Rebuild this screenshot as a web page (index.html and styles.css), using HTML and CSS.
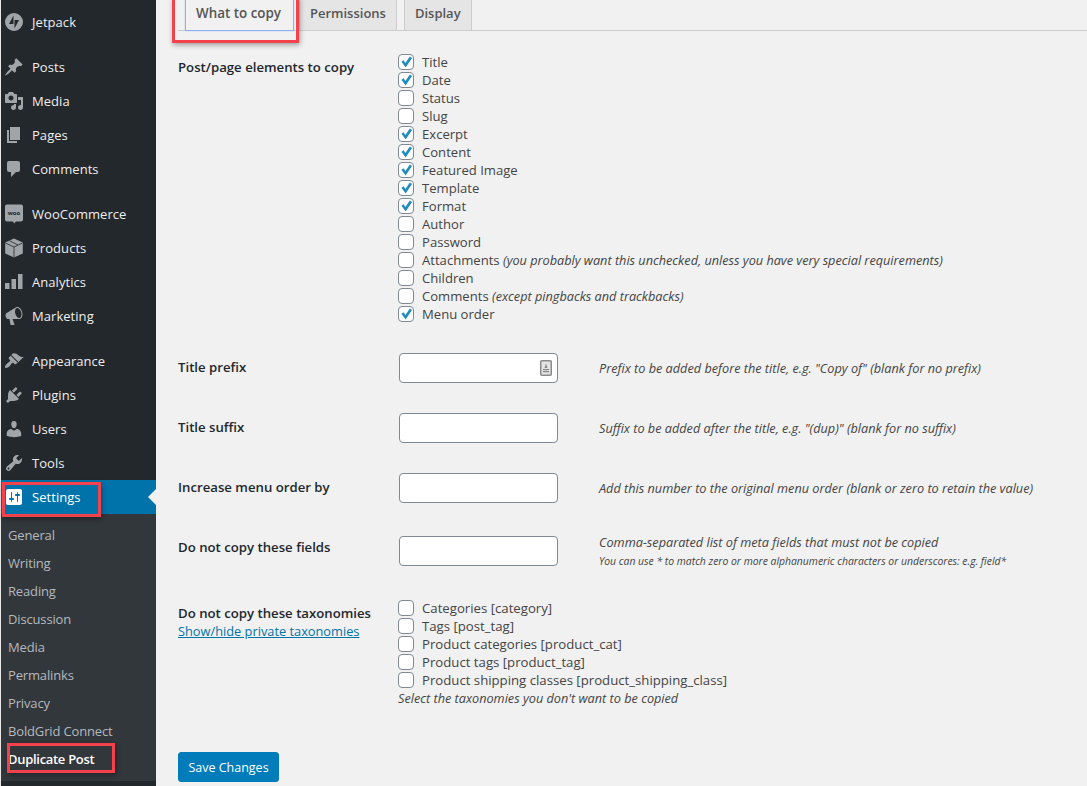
FILE: index.html
```html
<!DOCTYPE html>
<html lang="en">
<head>
<meta charset="utf-8">
<title>Duplicate Post Options</title>
<link rel="stylesheet" href="styles.css">
</head>
<body>
<div class="app">
  <nav class="sidebar">
    <ul class="menu">
      <li class="item"><svg class="ico" viewBox="0 0 20 20"><path fill-rule="evenodd" d="M10 1a9 9 0 1 1 0 18 9 9 0 0 1 0-18zM9.500 3.500 5 12h4.500zM10.500 16.500 15 8h-4.500z"/></svg>Jetpack</li>
      <li class="sep"></li>
      <li class="item"><svg class="ico" viewBox="0 0 20 20"><path d="M10.440 3.020l1.820-1.820 6.360 6.350-1.830 1.820c-1.050-.680-2.480-.570-3.410.360l-.750.750c-.920.930-1.040 2.350-.350 3.410l-1.830 1.820-2.410-2.410-2.800 2.790c-.420.420-3.380 2.710-3.800 2.290s1.860-3.390 2.280-3.810l2.790-2.790L4.100 9.360l1.830-1.820c1.050.690 2.480.570 3.400-.360l.750-.750c.930-.920 1.050-2.350.360-3.410z"/></svg>Posts</li>
      <li class="item"><svg class="ico" viewBox="0 0 20 20"><path d="M13 11V4c0-.550-.450-1-1-1h-1.670L9 1H5L3.670 3H2c-.550 0-1 .450-1 1v7c0 .550.450 1 1 1h10c.550 0 1-.450 1-1zM7 4.500c1.380 0 2.500 1.120 2.500 2.500S8.380 9.500 7 9.500 4.500 8.380 4.500 7 5.620 4.500 7 4.500zM14 6h5v10.500c0 1.380-1.120 2.500-2.500 2.500S14 17.880 14 16.500s1.120-2.500 2.500-2.500c.170 0 .340.020.500.050V9h-3V6zm-4 8.050V13h2v3.500c0 1.380-1.120 2.500-2.500 2.500S7 17.880 7 16.500 8.120 14 9.500 14c.170 0 .340.020.500.050z"/></svg>Media</li>
      <li class="item"><svg class="ico" viewBox="0 0 20 20"><path d="M6 15V2h10v13H6zm-1 1h8v2H3V5h2v11z"/></svg>Pages</li>
      <li class="item"><svg class="ico" viewBox="0 0 20 20"><path d="M5 2h9c1.100 0 2 .900 2 2v7c0 1.100-.900 2-2 2h-2l-5 5v-5H5c-1.100 0-2-.900-2-2V4c0-1.100.900-2 2-2z"/></svg>Comments</li>
      <li class="sep"></li>
      <li class="item"><svg class="ico" viewBox="0 0 20 20"><path d="M3 .500h14c1.100 0 2 .900 2 2v13c0 1.100-.900 2-2 2h-5l-2 2-.800-2H3c-1.100 0-2-.900-2-2v-13c0-1.100.900-2 2-2z"/><text class="woo" x="10" y="11" text-anchor="middle">woo</text></svg>WooCommerce</li>
      <li class="item"><svg class="ico" viewBox="0 0 20 20"><path d="M10 .500 18.800 4.500V15.500L10 19.500 1.200 15.500V4.500z"/><path class="cube" d="M1.500 5 10 9 18.500 5M10 9V19.500M5.500 2.800 14 7"/></svg>Products</li>
      <li class="item"><svg class="ico" viewBox="0 0 20 20"><path d="M1 11h4.500v6H1zM7.500 7H12v10H7.500zM14 2h4.500v15H14z"/></svg>Analytics</li>
      <li class="item"><svg class="ico" viewBox="0 0 20 20"><path fill-rule="evenodd" d="M18.150 5.940c.460 1.620.380 3.220-.020 4.480-.420 1.280-1.260 2.180-2.300 2.480-.160.060-.260.060-.400.060-.060.020-.120.020-.180.020-.060.020-.140.020-.220.020H8.500l2 5.500c.020.140-.060.260-.140.340-.080.100-.240.160-.340.160H6.950c-.100 0-.260-.060-.340-.160-.080-.080-.160-.200-.140-.340l-1-5.500H4.250c-.500.060-1.080-.180-1.540-.620s-.880-1.080-1.060-1.880c-.240-.800-.200-1.560-.020-2.200.180-.620.580-1.080 1.060-1.300l9-5.420c.100-.060.180-.100.240-.160.060-.040.140-.080.240-.120.160-.080.280-.120.500-.180 1.040-.300 2.240.100 3.220 1 .980.880 1.800 2.240 2.260 3.860zm-2.600 5.980c.400-.100.740-.340 1.040-.700.580-.700.860-1.760.860-3.040 0-.640-.100-1.300-.280-1.980-.340-1.360-1.020-2.500-1.780-3.240s-1.680-1.100-2.460-.880c-.820.220-1.400.960-1.700 2-.320 1.040-.280 2.360.060 3.720.380 1.360 1 2.500 1.800 3.240.780.740 1.620 1.100 2.460.880z"/></svg>Marketing</li>
      <li class="sep"></li>
      <li class="item"><svg class="ico" viewBox="0 0 20 20"><path d="M14.480 11.060L7.410 3.990l1.500-1.500c.500-.560 2.300-.470 3.510.320 1.210.800 1.430 1.280 2.910 2.100 1.180.640 2.450 1.260 4.450.850zm-.710.710L6.700 4.700 4.930 6.470c-.390.390-.390 1.020 0 1.410l1.060 1.060c.390.390.390 1.030 0 1.420-.600.600-1.430 1.150-2.210 1.730-.350.260-.700.530-1.010.840C1.430 13.710.600 15.950 1.300 16.650c.700.690 2.940-.130 4.200-1.470.310-.310.580-.660.840-1.010.580-.780 1.130-1.610 1.730-2.210.390-.390 1.030-.390 1.420 0l1.060 1.060c.390.390 1.020.390 1.410 0z"/></svg>Appearance</li>
      <li class="item"><svg class="ico" viewBox="0 0 20 20"><path d="M13.110 4.360L9.870 7.600 8 5.730l3.240-3.240c.350-.340 1.050-.200 1.560.320.520.510.660 1.210.310 1.550zm-8 1.770l.910-1.120 9.010 9.010-1.190.840c-.710.710-2.630 1.160-3.820 1.160H6.140L4.900 17.260c-.590.590-1.540.590-2.120 0-.590-.580-.590-1.530 0-2.120l1.240-1.240v-3.880c0-1.130.400-3.190 1.090-3.890zm7.260 3.970l3.240-3.240c.340-.350 1.040-.210 1.550.31.520.510.660 1.210.31 1.550l-3.240 3.250z"/></svg>Plugins</li>
      <li class="item"><svg class="ico" viewBox="0 0 20 20"><path d="M10 9.250c-2.270 0-2.730-3.440-2.730-3.440C7 4.020 7.820 2 9.970 2c2.160 0 2.980 2.020 2.710 3.810 0 0-.410 3.440-2.680 3.440zm0 2.570L12.720 10c2.390 0 4.520 2.330 4.520 4.530v2.490s-3.650 1.130-7.240 1.130c-3.650 0-7.240-1.130-7.240-1.130v-2.490c0-2.250 1.940-4.480 4.470-4.480z"/></svg>Users</li>
      <li class="item"><svg class="ico" viewBox="0 0 20 20"><path fill-rule="evenodd" d="M16.680 9.770c-1.340 1.340-3.300 1.670-4.950.990l-5.410 6.520c-.990.990-2.590.990-3.580 0s-.990-2.590 0-3.570l6.520-5.420c-.680-1.650-.350-3.610.990-4.950 1.280-1.280 3.120-1.620 4.720-1.060l-2.890 2.890 2.820 2.820 2.860-2.870c.530 1.580.180 3.390-1.080 4.650zM3.810 16.210c.400.390 1.040.390 1.430 0 .400-.400.400-1.040 0-1.430-.390-.400-1.030-.400-1.430 0-.390.390-.390 1.030 0 1.430z"/></svg>Tools</li>
      <li class="item current"><svg class="ico" viewBox="0 0 20 20"><path fill-rule="evenodd" d="M18 16V4c0-1.100-.900-2-2-2H4c-1.100 0-2 .900-2 2v12c0 1.100.900 2 2 2h12c1.100 0 2-.900 2-2zM8 11h1c.550 0 1 .450 1 1s-.450 1-1 1H8v1.500c0 .280-.220.500-.500.500s-.500-.220-.500-.500V13H6c-.550 0-1-.450-1-1s.450-1 1-1h1V5.500c0-.280.220-.500.500-.500s.500.220.500.500V11zm5-2h-1c-.550 0-1-.450-1-1s.450-1 1-1h1V5.500c0-.280.220-.500.500-.500s.500.220.500.500V7h1c.550 0 1 .450 1 1s-.450 1-1 1h-1v5.500c0 .280-.220.500-.500.500s-.500-.220-.500-.500V9z"/></svg>Settings</li>
    </ul>
    <ul class="submenu">
      <li>General</li>
      <li>Writing</li>
      <li>Reading</li>
      <li>Discussion</li>
      <li>Media</li>
      <li>Permalinks</li>
      <li>Privacy</li>
      <li>BoldGrid Connect</li>
      <li class="active">Duplicate Post</li>
    </ul>
    <div class="mark mark-settings"></div>
    <div class="mark mark-dup"></div>
  </nav>
  <main class="content">
    <div class="tabs">
      <a class="tab tab-active">What to copy</a>
      <a class="tab">Permissions</a>
      <a class="tab">Display</a>
    </div>
    <div class="mark mark-tab"></div>
    <form class="form">
      <div class="row row-elements">
        <div class="th">Post/page elements to copy</div>
        <div class="checks">
          <label><input type="checkbox" checked>Title</label>
          <label><input type="checkbox" checked>Date</label>
          <label><input type="checkbox">Status</label>
          <label><input type="checkbox">Slug</label>
          <label><input type="checkbox" checked>Excerpt</label>
          <label><input type="checkbox" checked>Content</label>
          <label><input type="checkbox" checked>Featured Image</label>
          <label><input type="checkbox" checked>Template</label>
          <label><input type="checkbox" checked>Format</label>
          <label><input type="checkbox">Author</label>
          <label><input type="checkbox">Password</label>
          <label><input type="checkbox">Attachments&nbsp;<em>(you probably want this unchecked, unless you have very special requirements)</em></label>
          <label><input type="checkbox">Children</label>
          <label><input type="checkbox">Comments&nbsp;<em>(except pingbacks and trackbacks)</em></label>
          <label><input type="checkbox" checked>Menu order</label>
        </div>
      </div>
      <div class="row row-field">
        <div class="th">Title prefix</div>
        <div class="field"><input type="text"><svg class="autofill" viewBox="0 0 12 16"><rect x=".75" y=".75" width="10.500" height="14.500" rx="1"/><path d="M6 3.500 7.500 8h-3zM3 9h6v1.200H3zM3 11h6v1.200H3z"/></svg></div>
        <div class="desc">Prefix to be added before the title, e.g. "Copy of" (blank for no prefix)</div>
      </div>
      <div class="row row-field">
        <div class="th">Title suffix</div>
        <div class="field"><input type="text"></div>
        <div class="desc">Suffix to be added after the title, e.g. "(dup)" (blank for no suffix)</div>
      </div>
      <div class="row row-field">
        <div class="th">Increase menu order by</div>
        <div class="field"><input type="text"></div>
        <div class="desc">Add this number to the original menu order (blank or zero to retain the value)</div>
      </div>
      <div class="row row-field row-meta">
        <div class="th">Do not copy these fields</div>
        <div class="field"><input type="text"></div>
        <div class="desc">Comma-separated list of meta fields that must not be copied<small>You can use * to match zero or more alphanumeric characters or underscores: e.g. field*</small></div>
      </div>
      <div class="row row-tax">
        <div class="th">Do not copy these taxonomies<a class="toggle">Show/hide private taxonomies</a></div>
        <div class="checks">
          <label><input type="checkbox">Categories [category]</label>
          <label><input type="checkbox">Tags [post_tag]</label>
          <label><input type="checkbox">Product categories [product_cat]</label>
          <label><input type="checkbox">Product tags [product_tag]</label>
          <label><input type="checkbox">Product shipping classes [product_shipping_class]</label>
          <em class="hint">Select the taxonomies you don't want to be copied</em>
        </div>
      </div>
      <button class="save" type="button">Save Changes</button>
    </form>
  </main>
</div>
</body>
</html>
```

FILE: styles.css
```css
* { box-sizing: border-box; }
html, body { margin: 0; height: 786px; overflow: hidden; }
body { font-family: "Open Sans", "Noto Sans", sans-serif; font-size: 13px; color: #444; background: #f1f1f1; }
ul { list-style: none; margin: 0; padding: 0; }

.app { display: flex; height: 786px; }

.sidebar { position: relative; flex: 0 0 156px; background: #23282d; border-left: 1px solid #e8e8e8; padding-top: 5px; }
.item { display: flex; align-items: center; height: 34px; padding-left: 3px; color: #eee; font-size: 13px; letter-spacing: .05px; }
.sep { height: 11px; }
.ico { flex: 0 0 20px; width: 20px; height: 20px; margin-right: 8px; fill: #a0a5aa; }
.woo { font: 700 6px "Open Sans", sans-serif; fill: #23282d; }
.cube { fill: none; stroke: #23282d; stroke-width: .8; }
.current { position: relative; background: #0073aa; color: #fff; }
.current .ico { fill: #fff; }
.current::after { content: ""; position: absolute; right: 0; top: 9px; border: 8px solid transparent; border-right-color: #f1f1f1; border-left-width: 0; }
.submenu { background: #32373c; padding: 7px 0 8px; }
.submenu li { height: 28px; line-height: 28px; padding-left: 7px; color: #b4b9be; letter-spacing: -.15px; }
.submenu .active { color: #fff; font-weight: 600; letter-spacing: -.3px; }

.mark { position: absolute; border: 3px solid #f4424c; box-shadow: 1px 2px 5px rgba(0,0,0,.35); pointer-events: none; }
.mark-settings { left: 1px; top: 482px; width: 99px; height: 35px; }
.mark-dup { left: 6px; top: 743px; width: 108px; height: 30px; }
.mark-tab { left: 172px; top: -3px; width: 127px; height: 46px; }

.content { flex: 1; min-width: 0; padding: 0 0 0 22px; }
.tabs { display: flex; height: 31px; padding-left: 7px; border-bottom: 1px solid #ccc; }
.tab { height: 31px; padding: 0 10px; margin-right: 7px; line-height: 27px; font-size: 13px; font-weight: 600; color: #555; background: #e5e5e5; border: 1px solid #ccc; border-top: 0; }
.tab-active { margin-right: 5px; padding: 0 12px 0 10px; font-size: 13.4px; background: #f1f1f1; border-color: #8db0ef; border-width: 0 1px 1px 1px; box-shadow: 0 0 1px #8db0ef; }

.row { display: grid; grid-template-columns: 220px auto; column-gap: 0; }
.th { font-size: 13.2px; font-weight: 600; color: #23282d; line-height: 18px; }
.checks { display: flex; flex-direction: column; font-size: 13.1px; }
.checks label { display: flex; align-items: center; height: 18px; white-space: nowrap; }
.checks input { appearance: none; position: relative; width: 16px; height: 16px; margin: 0 8px 0 0; background: #fff; border: 1px solid #7e8993; border-radius: 4px; }
.checks input:checked::before { content: ""; position: absolute; left: 1px; top: 1px; width: 12px; height: 12px; background: #1e8cbe; clip-path: polygon(12% 48%, 30% 35%, 45% 58%, 82% 4%, 100% 16%, 47% 95%); }
em, .desc { font-style: italic; font-size: 12.7px; }

.row-elements { margin-top: 22px; }
.row-elements .th { padding-top: 5px; }
.row-field { grid-template-columns: 221px 200px auto; grid-template-rows: 30px; margin-top: 30px; align-items: center; }
.row-field .th { margin-top: -3px; }
.field { position: relative; width: 159px; height: 30px; }
.field input { display: block; width: 100%; height: 30px; background: #fff; border: 1px solid #7e8993; border-radius: 4px; }
.autofill { position: absolute; right: 6px; top: 7px; width: 12px; height: 16px; fill: #8a8a8a; }
.autofill rect { fill: #e4e4e4; stroke: #8a8a8a; stroke-width: 1.500; }
.desc { color: #444; line-height: 18px; }
.desc small { display: block; margin-top: 2px; font-size: 10.4px; line-height: 16px; }
.row-meta { margin-top: 33px; }
.row-meta .th { margin-top: -8px; }
.row-meta .desc { align-self: start; margin-top: -3px; }
.row-tax { margin-top: 33px; }
.row-tax .th { padding-top: 5px; }
.row-tax .checks { font-size: 13.2px; }
.toggle { display: block; font-weight: 400; font-size: 12.8px; color: #0073aa; text-decoration: underline; }
.hint { line-height: 18px; }
.save { display: block; margin-top: 45px; width: 101px; height: 30px; padding: 0; background: #007cba; border: 1px solid #007cba; border-radius: 3px; color: #fff; font: 12.5px "Open Sans", sans-serif; }
```
